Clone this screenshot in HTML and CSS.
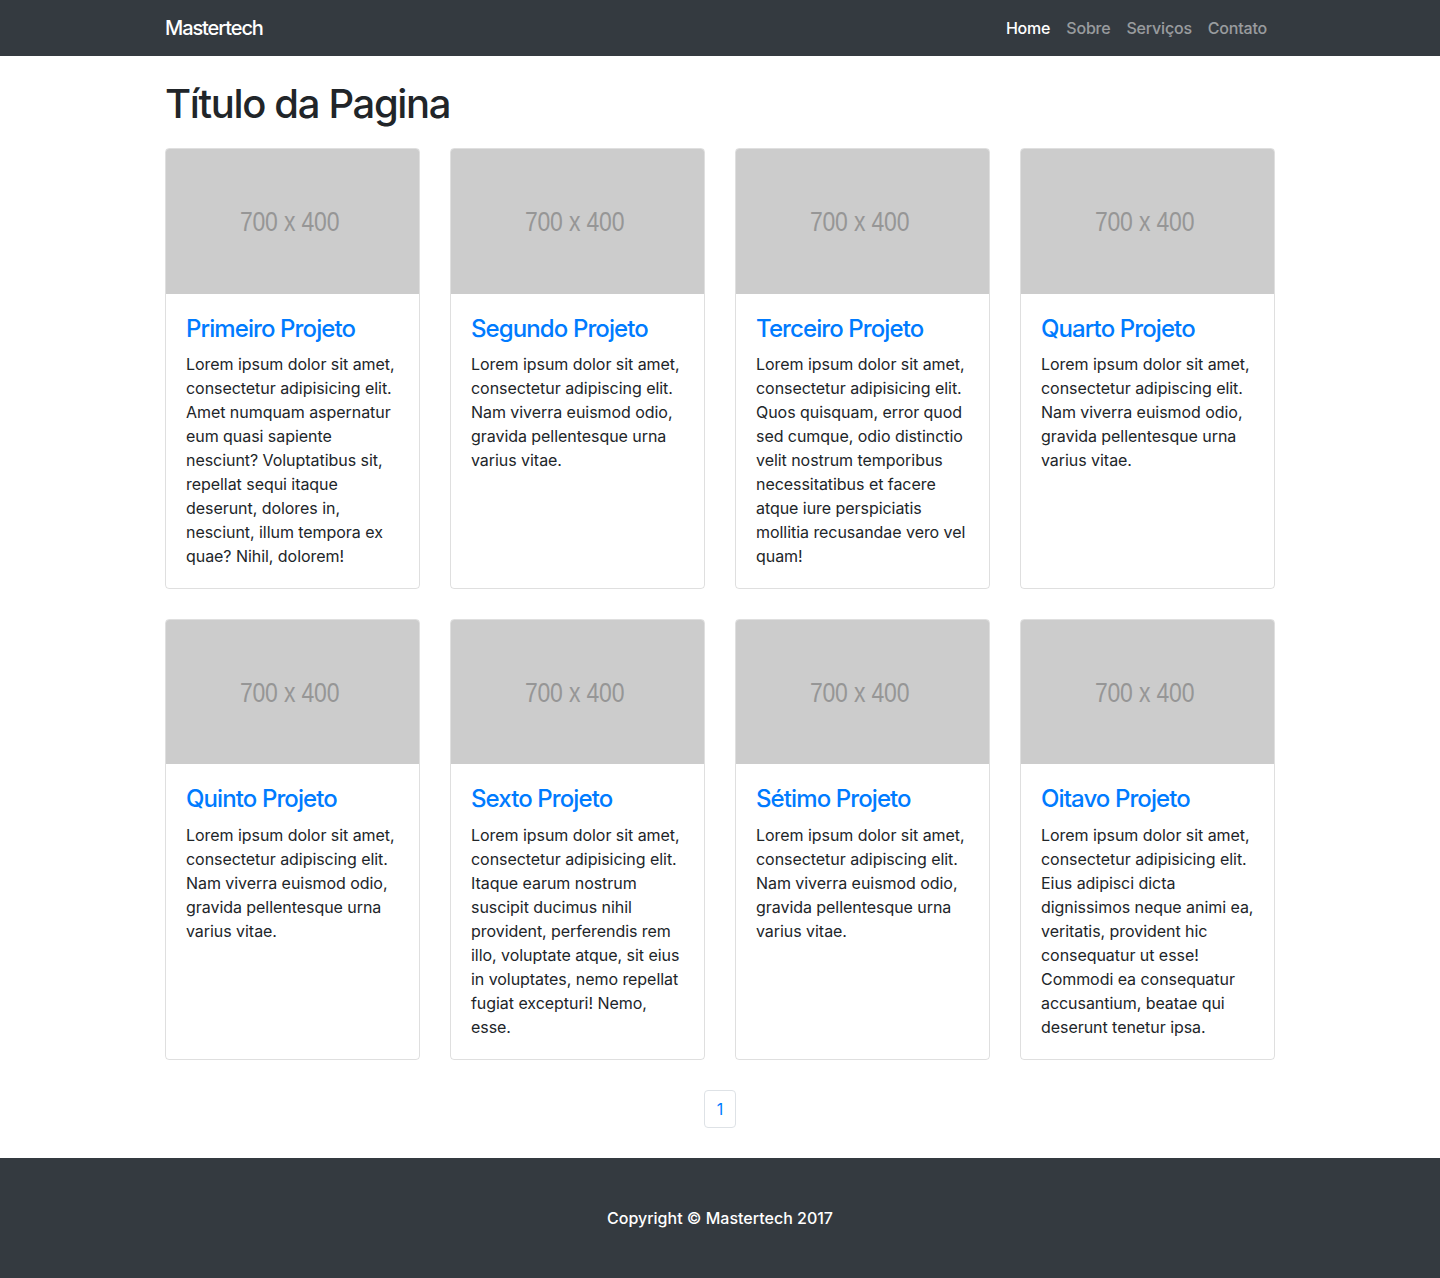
FILE: index.html
```html
<!DOCTYPE html>
<html lang="pt-BR">
<head>
<meta charset="utf-8">
<title>Mastertech</title>
<link rel="stylesheet" href="styles.css">
</head>
<body>
<nav class="navbar">
  <div class="container nav-inner">
    <a class="brand" href="#">Mastertech</a>
    <ul class="nav-links">
      <li><a class="nav-link active" href="#">Home</a></li>
      <li><a class="nav-link" href="#">Sobre</a></li>
      <li><a class="nav-link" href="#">Serviços</a></li>
      <li><a class="nav-link" href="#">Contato</a></li>
    </ul>
  </div>
</nav>

<main class="container">
  <h1 class="page-title">Título da Pagina</h1>

  <div class="grid">
    <div class="card">
      <div class="card-img"><span>700 x 400</span></div>
      <div class="card-body">
        <h4 class="card-title"><a href="#">Primeiro Projeto</a></h4>
        <p class="card-text">Lorem ipsum dolor sit amet, consectetur adipisicing elit. Amet numquam aspernatur eum quasi sapiente nesciunt? Voluptatibus sit, repellat sequi itaque deserunt, dolores in, nesciunt, illum tempora ex quae? Nihil, dolorem!</p>
      </div>
    </div>
    <div class="card">
      <div class="card-img"><span>700 x 400</span></div>
      <div class="card-body">
        <h4 class="card-title"><a href="#">Segundo Projeto</a></h4>
        <p class="card-text">Lorem ipsum dolor sit amet, consectetur adipiscing elit. Nam viverra euismod odio, gravida pellentesque urna varius vitae.</p>
      </div>
    </div>
    <div class="card">
      <div class="card-img"><span>700 x 400</span></div>
      <div class="card-body">
        <h4 class="card-title"><a href="#">Terceiro Projeto</a></h4>
        <p class="card-text">Lorem ipsum dolor sit amet, consectetur adipisicing elit. Quos quisquam, error quod sed cumque, odio distinctio velit nostrum temporibus necessitatibus et facere atque iure perspiciatis mollitia recusandae vero vel quam!</p>
      </div>
    </div>
    <div class="card">
      <div class="card-img"><span>700 x 400</span></div>
      <div class="card-body">
        <h4 class="card-title"><a href="#">Quarto Projeto</a></h4>
        <p class="card-text">Lorem ipsum dolor sit amet, consectetur adipiscing elit. Nam viverra euismod odio, gravida pellentesque urna varius vitae.</p>
      </div>
    </div>
    <div class="card">
      <div class="card-img"><span>700 x 400</span></div>
      <div class="card-body">
        <h4 class="card-title"><a href="#">Quinto Projeto</a></h4>
        <p class="card-text">Lorem ipsum dolor sit amet, consectetur adipiscing elit. Nam viverra euismod odio, gravida pellentesque urna varius vitae.</p>
      </div>
    </div>
    <div class="card">
      <div class="card-img"><span>700 x 400</span></div>
      <div class="card-body">
        <h4 class="card-title"><a href="#">Sexto Projeto</a></h4>
        <p class="card-text">Lorem ipsum dolor sit amet, consectetur adipisicing elit. Itaque earum nostrum suscipit ducimus nihil provident, perferendis rem illo, voluptate atque, sit eius in voluptates, nemo repellat fugiat excepturi! Nemo, esse.</p>
      </div>
    </div>
    <div class="card">
      <div class="card-img"><span>700 x 400</span></div>
      <div class="card-body">
        <h4 class="card-title"><a href="#">Sétimo Projeto</a></h4>
        <p class="card-text">Lorem ipsum dolor sit amet, consectetur adipiscing elit. Nam viverra euismod odio, gravida pellentesque urna varius vitae.</p>
      </div>
    </div>
    <div class="card">
      <div class="card-img"><span>700 x 400</span></div>
      <div class="card-body">
        <h4 class="card-title"><a href="#">Oitavo Projeto</a></h4>
        <p class="card-text">Lorem ipsum dolor sit amet, consectetur adipisicing elit. Eius adipisci dicta dignissimos neque animi ea, veritatis, provident hic consequatur ut esse! Commodi ea consequatur accusantium, beatae qui deserunt tenetur ipsa.</p>
      </div>
    </div>
  </div>

  <ul class="pagination">
    <li><a class="page-link" href="#">1</a></li>
  </ul>
</main>

<footer class="footer">
  <p>Copyright © Mastertech 2017</p>
</footer>
</body>
</html>
```

FILE: styles.css
```css
* { box-sizing: border-box; }

html, body {
  margin: 0;
  padding: 0;
}

body {
  font-family: Inter, "Noto Sans", "Liberation Sans", sans-serif;
  font-size: 16px;
  line-height: 1.5;
  color: #212529;
  background: #fff;
}

a { text-decoration: none; }

.container {
  width: 1140px;
  margin: 0 auto;
  padding: 0 15px;
}

/* Navbar */
.navbar {
  background: #343a40;
  height: 56px;
}

.nav-inner {
  display: flex;
  align-items: center;
  justify-content: space-between;
  height: 56px;
}

.brand {
  color: #fff;
  font-size: 20px;
  font-weight: 500;
  line-height: 30px;
  letter-spacing: -1.1px;
}

.nav-links {
  list-style: none;
  margin: 0;
  padding: 0;
  display: flex;
}

.nav-link {
  display: block;
  padding: 8px;
  color: rgba(255, 255, 255, 0.5);
  font-weight: 500;
  letter-spacing: -0.2px;
}

.nav-link.active { color: #fff; }

/* Title */
.page-title {
  margin: 24px 0 20px;
  font-size: 40px;
  font-weight: 500;
  line-height: 48px;
  letter-spacing: -1.35px;
}

/* Grid of cards */
.grid {
  display: grid;
  grid-template-columns: repeat(4, 1fr);
  column-gap: 30px;
  row-gap: 30px;
}

.card {
  border: 1px solid rgba(0, 0, 0, 0.125);
  border-radius: 4px;
  overflow: hidden;
  display: flex;
  flex-direction: column;
}

.card-img {
  aspect-ratio: 700 / 400;
  background: #ccc;
  display: flex;
  align-items: center;
  justify-content: center;
}

.card-img span {
  font-family: "Liberation Sans", Arial, sans-serif;
  font-size: 28px;
  color: #969696;
  transform: scaleX(0.82);
  line-height: 1;
  letter-spacing: -0.2px;
  position: relative;
  top: 1px;
  left: -3px;
}

.card-body {
  padding: 21px 20px 19.5px;
  flex: 1;
}

.card-title {
  margin: 0 0 9px;
  font-size: 24px;
  font-weight: 500;
  line-height: 28.8px;
  letter-spacing: -0.9px;
}

.card-title a { color: #007bff; }

.card-text {
  margin: 0;
  letter-spacing: -0.05px;
}

/* Pagination */
.pagination {
  list-style: none;
  margin: 30px 0 30px;
  padding: 0;
  display: flex;
  justify-content: center;
}

.page-link {
  display: block;
  padding: 8px 12px;
  line-height: 20px;
  color: #007bff;
  border: 1px solid #dee2e6;
  border-radius: 4px;
}

/* Footer */
.footer {
  background: #343a40;
  padding: 48px 0;
}

.footer p {
  margin: 0;
  text-align: center;
  color: #fff;
  font-weight: 500;
}
```
